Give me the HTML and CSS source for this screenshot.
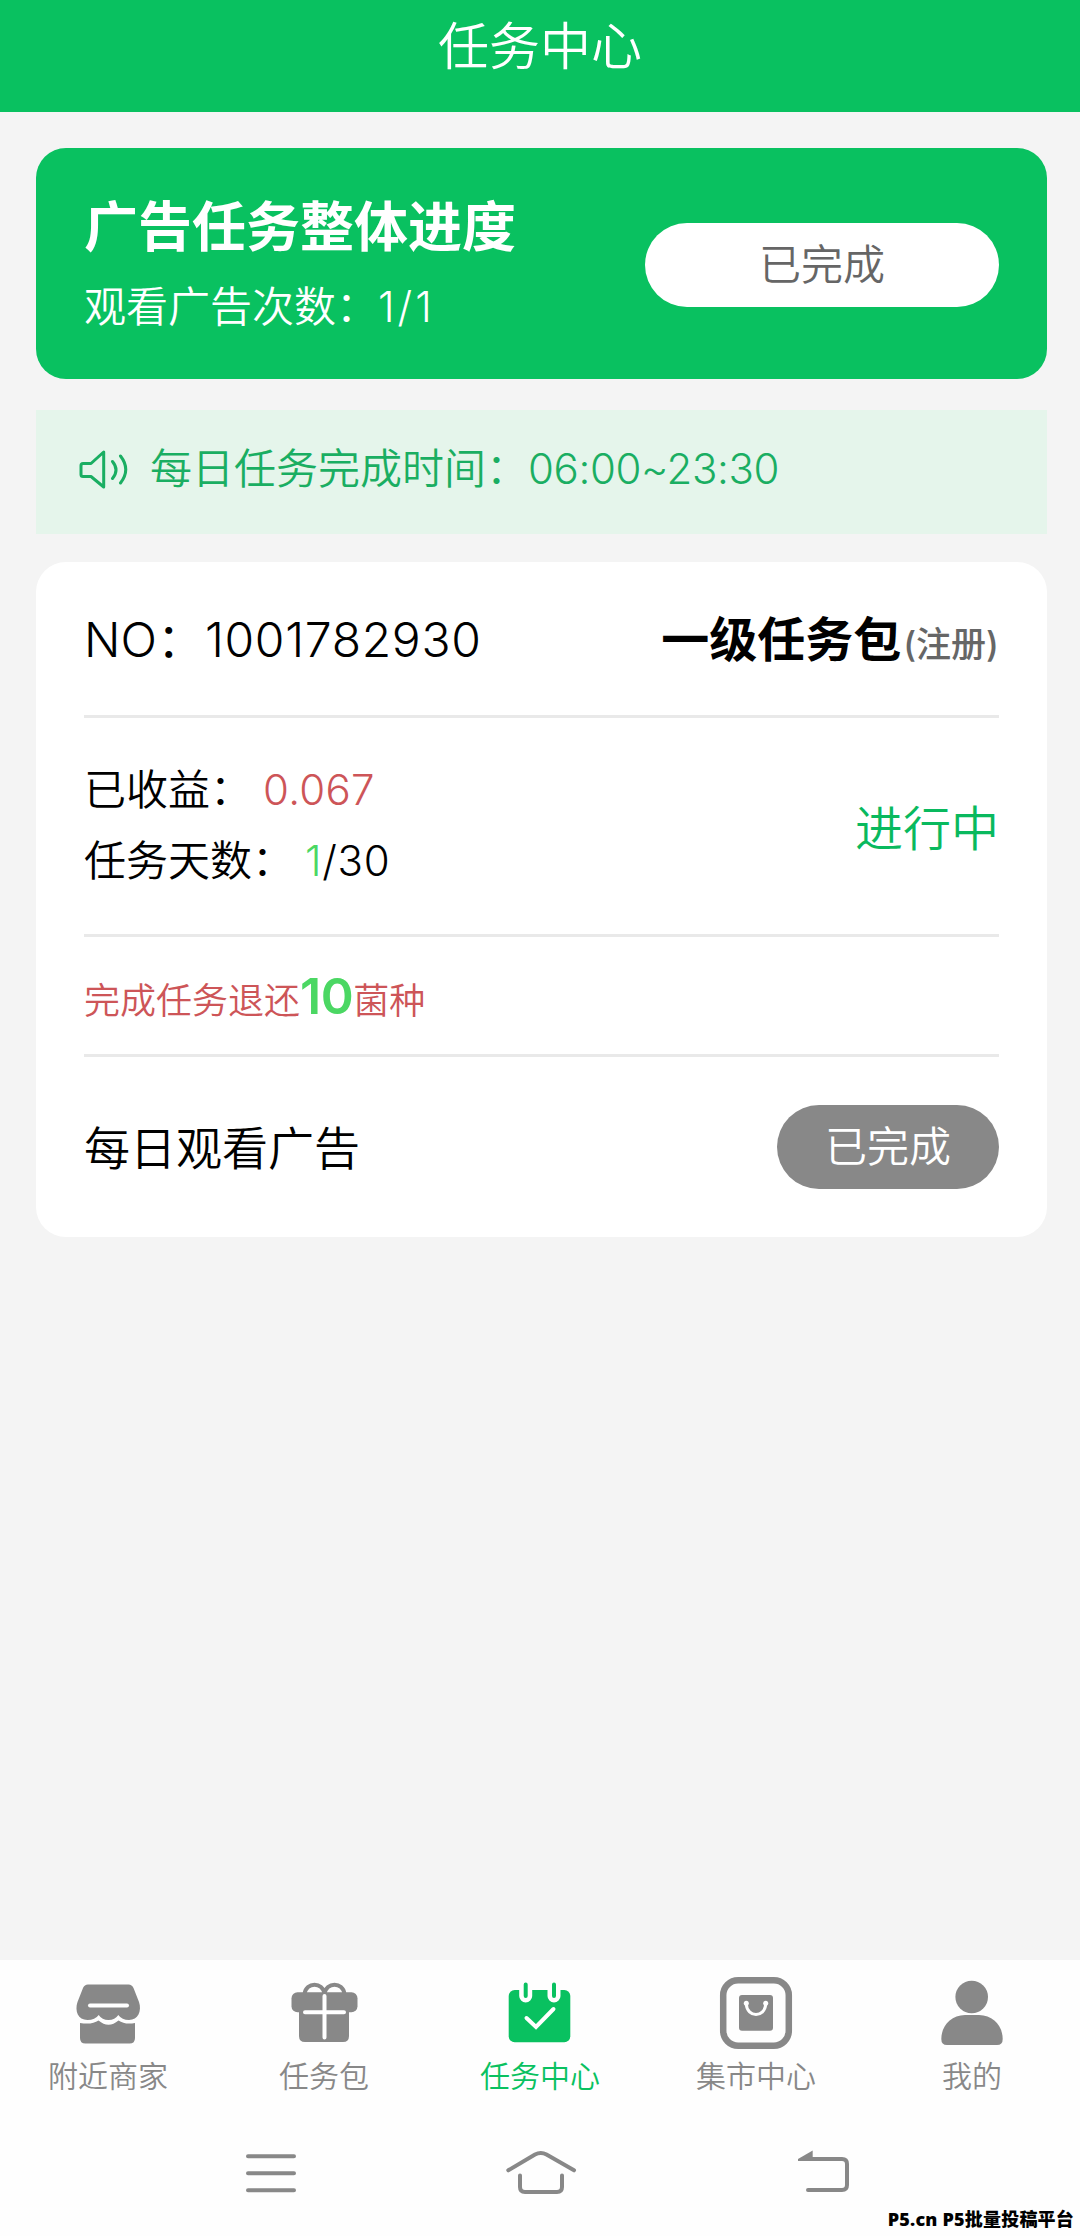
FILE: index.html
```html
<!DOCTYPE html>
<html lang="zh-CN">
<head>
    <meta charset="UTF-8">
    <meta name="viewport" content="width=device-width, initial-scale=1.0">
    <title>任务中心</title>
    <link rel="stylesheet" href="styles.css">
</head>
<body>
    <header class="header">任务中心</header>

    <main class="content">
        <section class="progress">
            <div class="progress-info">
                <h1>广告任务整体进度</h1>
                <p>观看广告次数：<span class="num count">1/1</span></p>
            </div>
            <button class="progress-btn">已完成</button>
        </section>

        <div class="notice">
            <svg width="52" height="42" viewBox="0 0 52 42">
                <path d="M5 15.5H13L25.7 4V39L13 28.5H5Q3 28.5 3 26.5V17.5Q3 15.5 5 15.5Z"/>
                <path d="M34.5 13.5Q41.5 22 34.5 30.5M42.5 8Q53 21.5 42.5 35"/>
            </svg>
            <span class="notice-text">每日任务完成时间：<span class="num time">06:00~23:30</span></span>
        </div>

        <section class="task">
            <div class="row row-title">
                <div class="task-no">NO：<span class="num">1001782930</span></div>
                <div class="task-name">一级任务包<small>(注册)</small></div>
            </div>
            <div class="row row-info">
                <div class="info">
                    <p>已收益：<span class="num red">0.067</span></p>
                    <p>任务天数：<span class="num"><b>1</b>/30</span></p>
                </div>
                <div class="status">进行中</div>
            </div>
            <div class="row row-refund">
                <p>完成任务退还<strong>10</strong>菌种</p>
            </div>
            <div class="row row-watch">
                <div class="watch">每日观看广告</div>
                <button class="done-btn">已完成</button>
            </div>
        </section>
    </main>

    <footer class="footer">
        <nav class="tabs">
            <a class="tab">
                <svg width="72" height="72" viewBox="0 0 72 72">
                    <path class="fill" d="M16 8.5H56.5Q60 8.5 61.5 12L67 26C70 35 66 44 57 44Q50 44 46.3 39Q43 44 36.5 44Q30 44 26.7 39Q23 44 15.5 44C6 44 2.500 35 5.500 26L11 12Q12.500 8.500 16 8.500Z"/>
                    <path class="fill" d="M8 47Q20 49 26.500 44.500Q36.500 53 46.500 44.500Q53 49 63 47V62Q63 67.500 57.500 67.500H13.500Q8 67.500 8 62Z"/>
                    <path class="white" d="M18 29.500H55"/>
                </svg>
                <span>附近商家</span>
            </a>
            <a class="tab">
                <svg width="72" height="72" viewBox="0 0 72 72">
                    <path class="line" d="M16.500 18C18 5.500 35 5.500 36.500 18C38 5.500 55 5.500 56.500 18"/>
                    <rect class="fill" x="3.500" y="16.300" width="66" height="20" rx="6"/>
                    <path class="fill" d="M11 28H61V60Q61 66 55 66H17Q11 66 11 60Z"/>
                    <path class="white" d="M36.500 20V61.500M17 36.300H56"/>
                </svg>
                <span>任务包</span>
            </a>
            <a class="tab active">
                <svg width="72" height="72" viewBox="0 0 72 72">
                    <rect class="fill" x="4.700" y="14" width="61.600" height="52.300" rx="6"/>
                    <path class="gap" d="M21.700 8V20M50 8V20"/>
                    <path class="line" d="M21.700 8.500V20M50 8.500V20"/>
                    <path class="white" d="M22.500 42L32 51L49.500 33"/>
                </svg>
                <span>任务中心</span>
            </a>
            <a class="tab">
                <svg width="72" height="72" viewBox="0 0 72 72">
                    <rect class="frame" x="3.200" y="4.200" width="65.600" height="65.600" rx="15"/>
                    <rect class="fill" x="19" y="19" width="34" height="35.700" rx="3"/>
                    <path class="thin" d="M26.300 28C27 42 45 42 45.700 28"/>
                    <circle class="dot" cx="26.300" cy="27.300" r="2.500"/>
                    <circle class="dot" cx="45.700" cy="27.300" r="2.500"/>
                </svg>
                <span>集市中心</span>
            </a>
            <a class="tab">
                <svg width="72" height="72" viewBox="0 0 72 72">
                    <circle class="fill" cx="35.700" cy="21" r="16.300"/>
                    <path class="fill" d="M29 39H43C57 39 66.700 50 66.700 63Q66.700 69 61 69H11Q5.300 69 5.300 63C5.300 50 15 39 29 39Z"/>
                </svg>
                <span>我的</span>
            </a>
        </nav>

        <!-- system keys -->
        <div class="keys">
            <svg width="80" height="80" viewBox="0 0 80 80">
                <path d="M18 23.300H64M18 40.300H64M18 57.300H64"/>
            </svg>
            <svg width="80" height="80" viewBox="0 0 80 80">
                <path d="M8.300 37.300L35 21.500Q40.800 18.500 46.500 21.500L74 37.300M20 42.500V54Q20 59 25 59H57Q62 59 62 54V42.500"/>
            </svg>
            <svg width="80" height="80" viewBox="0 0 80 80">
                <path d="M36 26H72Q77 26 77 31V52Q77 57 72 57H38"/>
                <path class="arrow" d="M28 28V26L42.700 17.500V28Z"/>
            </svg>
        </div>
    </footer>

    <div class="mark">P5.cn P5批量投稿平台</div>
</body>
</html>
```
FILE: styles.css
```css
* {
    box-sizing: border-box;
}

body, html {
    margin: 0;
    padding: 0;
    height: 100%;
}

body {
    display: flex;
    flex-direction: column;
    min-height: 2236px;
    background: #f4f4f4;
    color: #000;
    font-family: Inter, "Noto Sans CJK SC", sans-serif;
    font-size: 42px;
    font-weight: 350;
}

h1, p {
    margin: 0;
}

button {
    border: none;
    padding: 0;
    font: inherit;
}

.num {
    font-weight: 320;
    letter-spacing: 0.7px;
}

.header {
    height: 112px;
    line-height: 94px;
    background: #09c160;
    color: #fff;
    text-align: center;
    font-size: 51px;
    flex-shrink: 0;
}

.content {
    flex: 1;
    padding: 36px 33px 0 36px;
}

/* overall progress */
.progress {
    display: flex;
    justify-content: space-between;
    align-items: center;
    height: 231px;
    padding: 2px 48px 0;
    border-radius: 30px;
    background: #09c160;
    color: #fff;
}

.progress-info {
    padding-top: 4px;
}

.progress h1 {
    font-size: 54px;
    line-height: 80px;
    font-weight: 700;
}

.progress p {
    line-height: 78px;
}

.count {
    letter-spacing: 3px;
}

.progress-btn {
    width: 354px;
    height: 84px;
    padding-bottom: 7px;
    border-radius: 42px;
    background: #fff;
    color: #666;
}

.notice {
    display: flex;
    align-items: center;
    gap: 20px;
    height: 124px;
    margin: 31px 0 28px;
    padding: 0 42px 6px;
    background: #e5f5eb;
    color: #1aae62;
}

.notice svg {
    fill: none;
    stroke: #1aae62;
    stroke-width: 3;
    stroke-linecap: round;
    stroke-linejoin: round;
}

.notice-text {
    padding-bottom: 8px;
}

.time {
    letter-spacing: -0.4px;
}

/* task card */
.task {
    height: 675px;
    padding: 0 48px;
    border-radius: 30px;
    background: #fff;
}

.row {
    display: flex;
    justify-content: space-between;
    align-items: center;
    border-bottom: 3px solid #e9e9e9;
}

.row-title {
    height: 156px;
    padding-bottom: 5px;
}

.task-no {
    font-size: 48px;
}

.task-name {
    font-size: 48px;
    font-weight: 700;
}

.task-name small {
    margin-left: 2px;
    font-size: 35px;
    font-weight: 500;
    color: #666;
}

.row-info {
    height: 219px;
    padding-bottom: 2px;
}

.info p {
    line-height: 71px;
}

.info .num {
    margin-left: 11px;
}

.info .red {
    color: #cd5558;
    letter-spacing: 0.3px;
}

.info b {
    font-weight: inherit;
    color: #4bd763;
}

.status {
    font-size: 48px;
    color: #09b95e;
}

.row-refund {
    height: 120px;
    color: #cd5558;
    font-size: 36px;
}

.row-refund strong {
    color: #4bd763;
    font-size: 50px;
    font-weight: 600;
    letter-spacing: -0.5px;
}

.row-watch {
    height: 180px;
    padding-bottom: 1px;
    border-bottom: none;
}

.watch {
    padding-bottom: 3px;
    font-size: 46px;
}

.done-btn {
    width: 222px;
    height: 84px;
    padding-bottom: 6px;
    border-radius: 42px;
    background: #888;
    color: #fff;
}

/* bottom bar */
.footer {
    height: 276px;
    background: #fefefe;
    flex-shrink: 0;
}

.tabs {
    display: grid;
    grid-template-columns: repeat(5, 1fr);
    height: 173px;
    padding-top: 16px;
}

.tab {
    display: flex;
    flex-direction: column;
    align-items: center;
    color: #888;
    font-size: 30px;
    line-height: 57px;
}

.tab svg {
    overflow: visible;
}

.active {
    color: #09c160;
}

.fill {
    fill: currentColor;
}

.line, .white, .gap, .thin, .frame {
    fill: none;
    stroke: currentColor;
    stroke-width: 4;
    stroke-linecap: round;
}

.white {
    stroke: #fff;
}

.gap {
    stroke: #fefefe;
    stroke-width: 13;
}

.thin {
    stroke: #fff;
    stroke-width: 3;
}

.frame {
    stroke-width: 6.5;
}

.dot {
    fill: #fff;
}

.keys {
    display: grid;
    grid-template-columns: repeat(3, 1fr);
    justify-items: center;
    padding: 0 135px;
}

.keys svg {
    fill: none;
    stroke: #888;
    stroke-width: 4;
    stroke-linecap: round;
}

.keys .arrow {
    fill: #888;
    stroke: none;
}

.mark {
    position: absolute;
    right: 6px;
    top: 2206px;
    font-family: "Noto Sans", "Noto Sans CJK SC", sans-serif;
    font-size: 18px;
    line-height: 26px;
    font-weight: 900;
    letter-spacing: 0.2px;
}
```
